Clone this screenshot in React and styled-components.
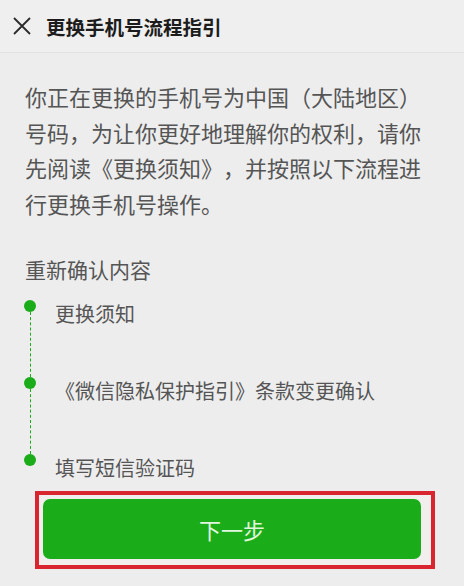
import styled, { createGlobalStyle } from "styled-components";

const GlobalStyle = createGlobalStyle`
    * {
        box-sizing: border-box;
    }

    body {
        margin: 0;
        background-color: #ededed;
        font-family: "Noto Sans CJK SC", "Noto Sans", sans-serif;
        text-spacing-trim: space-all;
    }
`;

const Page = styled.main`
    width: 464px;
    min-height: 586px;
    background-color: #ededed;
`;

const Header = styled.header`
    display: flex;
    align-items: center;
    gap: 15px;
    height: 53px;
    padding-left: 13px;
    background-color: #efefef;
    border-bottom: 1px solid #e1e1e1;
`;

const CloseButton = styled.button`
    display: flex;
    padding: 0;
    border: none;
    background: none;
    color: #2b2b2b;
`;

const Title = styled.h1`
    margin: 0;
    font-size: 19.5px;
    font-weight: 700;
    color: #1c1c1c;
`;

const Content = styled.section`
    padding: 26px 25px 0 25px;
`;

const Intro = styled.p`
    margin: 0;
    font-size: 22px;
    line-height: 35.5px;
    color: #555555;
`;

const SectionTitle = styled.h2`
    margin: 33px 0 16px;
    font-size: 21px;
    font-weight: 400;
    line-height: 30px;
    color: #555555;
`;

const Steps = styled.ol`
    margin: 0;
    padding: 0;
    list-style: none;
`;

const Step = styled.li`
    display: flex;
    gap: 19px;
    height: ${props => (props.$last ? "28px" : "77px")};
    margin-left: -1px;
`;

const Rail = styled.div`
    display: flex;
    flex-direction: column;
    align-items: center;
    width: 12px;
`;

const Dot = styled.span`
    flex: none;
    width: 12px;
    height: 12px;
    border-radius: 50%;
    background-color: #1aad19;
`;

const Connector = styled.span`
    flex: 1;
    border-left: 1.5px dashed #1aad19;
`;

const StepLabel = styled.span`
    font-size: 20px;
    line-height: 28px;
    color: #555555;
`;

const Highlight = styled.div`
    width: 400px;
    margin: 9px 0 0 35px;
    padding: 4px 10px 6px 4px;
    border: 4px solid #d9252f;
    background-color: #f3eeee;
`;

const PrimaryButton = styled.button`
    display: block;
    width: 100%;
    height: 60px;
    border: none;
    border-radius: 7px;
    background-color: #1aad19;
    color: #e2f6df;
    font-family: inherit;
    font-size: 22px;
`;

const steps = ["更换须知", "《微信隐私保护指引》条款变更确认", "填写短信验证码"];

function CloseIcon() {
    return (
        <svg width="18" height="18" viewBox="0 0 18 18" fill="none">
            <path d="M1 1L17 17M17 1L1 17" stroke="currentColor" strokeWidth="1.8" />
        </svg>
    );
}

export default function App() {
    return (
        <Page>
            <GlobalStyle />
            <Header>
                <CloseButton aria-label="关闭">
                    <CloseIcon />
                </CloseButton>
                <Title>更换手机号流程指引</Title>
            </Header>
            <Content>
                <Intro>
                    你正在更换的手机号为中国（大陆地区）号码，为让你更好地理解你的权利，请你先阅读《更换须知》，并按照以下流程进行更换手机号操作。
                </Intro>
                <SectionTitle>重新确认内容</SectionTitle>
                <Steps>
                    {steps.map((label, i) => {
                        const last = i === steps.length - 1;
                        return (
                            <Step key={label} $last={last}>
                                <Rail>
                                    <Dot />
                                    {!last && <Connector />}
                                </Rail>
                                <StepLabel>{label}</StepLabel>
                            </Step>
                        );
                    })}
                </Steps>
            </Content>
            <Highlight>
                <PrimaryButton>下一步</PrimaryButton>
            </Highlight>
        </Page>
    );
}
